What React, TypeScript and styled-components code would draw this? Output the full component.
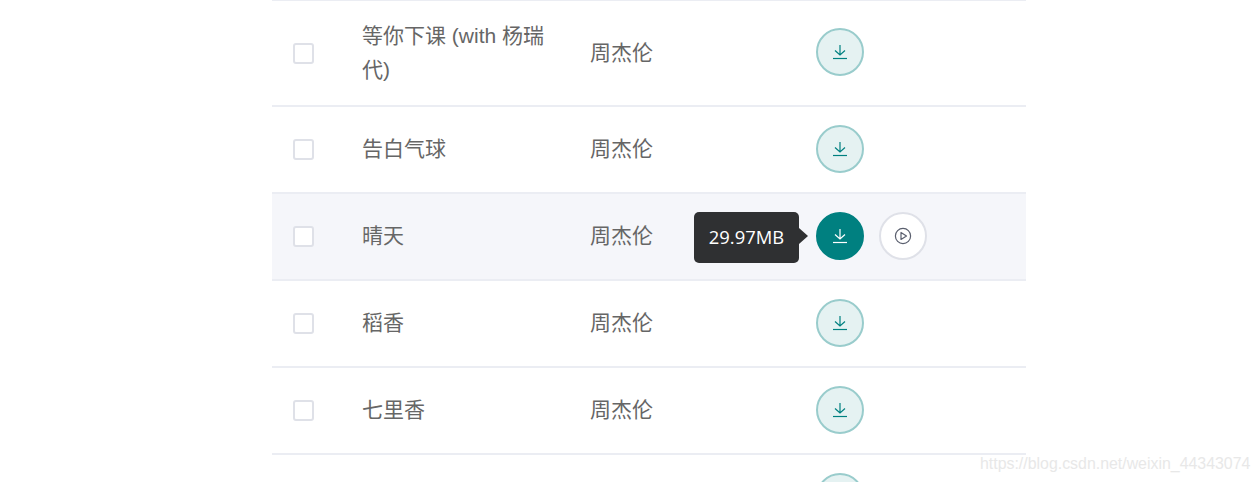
import React from 'react';
import styled, { createGlobalStyle } from 'styled-components';

const GlobalStyle = createGlobalStyle`
  html, body {
    margin: 0;
    padding: 0;
    height: 482px;
    overflow: hidden;
    background: #ffffff;
  }
`;

const Page = styled.div`
  position: relative;
  width: 1260px;
  height: 482px;
  overflow: hidden;
  font-family: "Liberation Sans", "Noto Sans CJK SC", sans-serif;
`;

const Table = styled.div`
  width: 754px;
  margin-left: 272px;
  border-top: 1px solid #ebedf3;
`;

const Row = styled.div<{ $active?: boolean; $tall?: boolean }>`
  display: grid;
  grid-template-columns: 90px 228px 226px 1fr;
  align-items: center;
  height: ${({ $tall }) => ($tall ? 104 : 85)}px;
  border-bottom: 2px solid #ebedf3;
  background: ${({ $active }) => ($active ? '#f5f6fa' : '#ffffff')};
`;

const Checkbox = styled.span`
  display: block;
  box-sizing: border-box;
  width: 21px;
  height: 21px;
  margin-left: 21px;
  border: 2px solid #dfe1e8;
  border-radius: 3px;
  background: #ffffff;
`;

const Title = styled.div<{ $tall?: boolean }>`
  font-size: 21px;
  line-height: 34px;
  color: #666666;
  padding-right: 40px;
  margin-bottom: ${({ $tall }) => ($tall ? 0 : 2)}px;
`;

const Artist = styled.div<{ $tall?: boolean }>`
  font-size: 21px;
  line-height: 34px;
  color: #666666;
  margin-bottom: ${({ $tall }) => ($tall ? 0 : 2)}px;
`;

const Actions = styled.div`
  position: relative;
  display: flex;
  align-items: center;
  gap: 15px;
  margin-bottom: 2px;
`;

const DownloadButton = styled.button<{ $active?: boolean }>`
  display: flex;
  align-items: center;
  justify-content: center;
  box-sizing: border-box;
  width: 48px;
  height: 48px;
  padding: 0;
  border-radius: 50%;
  border: 2px solid ${({ $active }) => ($active ? '#008080' : '#99cccc')};
  background: ${({ $active }) => ($active ? '#008080' : '#e5f2f2')};
  color: ${({ $active }) => ($active ? '#ffffff' : '#008080')};
`;

const PlayButton = styled.button`
  display: flex;
  align-items: center;
  justify-content: center;
  box-sizing: border-box;
  width: 48px;
  height: 48px;
  padding: 0;
  border-radius: 50%;
  border: 2px solid #dfe1e8;
  background: #ffffff;
  color: #5a5f6e;
`;

const Tooltip = styled.div`
  position: absolute;
  right: calc(100% + 17px);
  top: 0;
  width: 105px;
  height: 51px;
  box-sizing: border-box;
  padding-bottom: 2px;
  display: flex;
  align-items: center;
  justify-content: center;
  border-radius: 5px;
  background: #2f3032;
  color: #ffffff;
  font-family: "Open Sans", "Liberation Sans", sans-serif;
  font-size: 18.4px;
  white-space: nowrap;

  &::after {
    content: '';
    position: absolute;
    left: 100%;
    top: 24px;
    margin-top: -8px;
    border-style: solid;
    border-width: 8px 0 8px 9px;
    border-color: transparent transparent transparent #2f3032;
  }
`;

const Watermark = styled.div`
  position: absolute;
  left: 980px;
  top: 454px;
  font-size: 15.9px;
  line-height: 19px;
  color: #e8e8e8;
  white-space: nowrap;
`;

const DownloadIcon: React.FC = () => (
  <svg width="16" height="16" viewBox="0 0 16 16" fill="none" stroke="currentColor" strokeWidth="1.2">
    <path d="M8 1v9.500M3 6.500 8 11l5-4.500" />
    <path d="M1 14.500h14" />
  </svg>
);

const PlayIcon: React.FC = () => (
  <svg width="18" height="18" viewBox="0 0 18 18" fill="none" stroke="currentColor" strokeWidth="1.2">
    <circle cx="9" cy="9" r="7.600" />
    <path d="M7 5.500v7L12.500 9z" strokeLinejoin="round" />
  </svg>
);

interface Song {
  title: string;
  tall?: boolean;
  active?: boolean;
  size?: string;
}

const songs: Song[] = [
  { title: '等你下课 (with 杨瑞代)', tall: true },
  { title: '告白气球' },
  { title: '晴天', active: true, size: '29.97MB' },
  { title: '稻香' },
  { title: '七里香' },
  { title: '' },
];

const App: React.FC = () => (
  <Page>
    <GlobalStyle />
    <Table>
      {songs.map((song, index) => (
        <Row key={index} $tall={song.tall} $active={song.active}>
          <div>{song.title && <Checkbox />}</div>
          <Title $tall={song.tall}>{song.title}</Title>
          <Artist $tall={song.tall}>{song.title && '周杰伦'}</Artist>
          <Actions>
            {song.size && <Tooltip>{song.size}</Tooltip>}
            <DownloadButton $active={song.active} aria-label="download">
              <DownloadIcon />
            </DownloadButton>
            {song.active && (
              <PlayButton aria-label="play">
                <PlayIcon />
              </PlayButton>
            )}
          </Actions>
        </Row>
      ))}
    </Table>
    <Watermark>https://blog.csdn.net/weixin_44343074</Watermark>
  </Page>
);

export default App;
